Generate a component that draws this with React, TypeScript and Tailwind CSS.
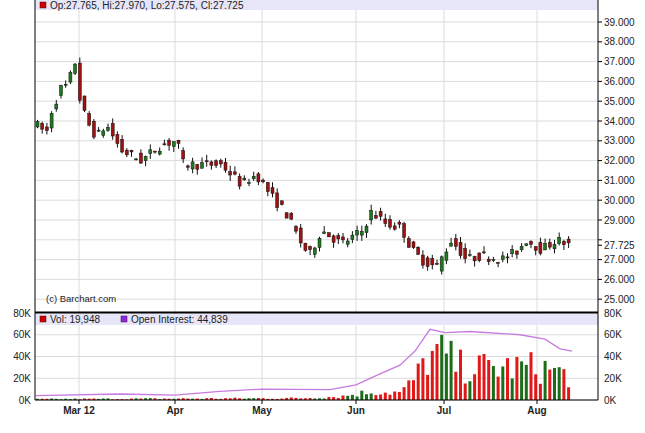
import React from 'react';

const PX0 = 35;
const PX1 = 598;
const priceY = (p: number) => 22 + (39 - p) * 19.8;
const volY = (v: number) => 400 - (v / 80000) * 87;

const keys: [number, number][] = [
  [35, 33.8], [45, 33.4], [50, 34.5], [60, 35.7], [67, 35.8], [73, 37.2], [78, 35.2], [85, 34.0],
  [95, 33.2], [105, 33.8], [120, 32.5], [140, 32.0], [160, 32.8], [175, 33.0], [182, 31.8],
  [200, 31.8], [220, 31.8], [240, 30.8], [255, 31.3], [270, 30.2], [285, 29.3], [300, 27.8],
  [308, 27.2], [320, 28.5], [340, 27.8], [360, 28.4], [370, 29.4], [385, 28.8], [400, 28.6],
  [410, 27.5], [420, 27.0], [435, 26.6], [450, 28.0], [465, 27.0], [480, 27.2], [500, 27.0],
  [515, 27.4], [525, 28.0], [540, 27.5], [555, 28.0], [570, 27.7],
];

const interp = (pts: [number, number][], x: number) => {
  for (let i = 1; i < pts.length; i++) {
    if (x <= pts[i][0]) {
      const [x0, y0] = pts[i - 1];
      const [x1, y1] = pts[i];
      return y0 + ((x - x0) / (x1 - x0)) * (y1 - y0);
    }
  }
  return pts[pts.length - 1][1];
};

let seed = 7;
const rnd = () => {
  seed = (seed * 16807) % 2147483647;
  return seed / 2147483647;
};

const candles: { x: number; o: number; c: number; h: number; l: number }[] = [];
for (let x = 36; x <= 571; x += 4.7) {
  const base = interp(keys, x);
  const prev = interp(keys, x - 4.7);
  const o = prev + (rnd() - 0.5) * 0.5;
  const c = base + (rnd() - 0.5) * 0.5;
  const h = Math.max(o, c) + rnd() * 0.3;
  const l = Math.min(o, c) - rnd() * 0.3;
  candles.push({ x, o, c, h, l });
}

const volKeys: [number, number][] = [
  [36, 1000], [300, 2000], [340, 4000], [370, 9000], [400, 8000], [415, 25000], [425, 45000],
  [440, 50000], [460, 35000], [500, 35000], [540, 35000], [572, 25000],
];
const oiKeys: [number, number][] = [
  [36, 4000], [120, 5500], [175, 4500], [220, 8000], [262, 10000], [330, 9500], [356, 14000],
  [380, 24000], [400, 32000], [415, 45000], [430, 65000], [445, 62000], [470, 63000], [520, 60000],
  [545, 56000], [560, 47000], [572, 45000],
];

const vols = candles.map((cd) => {
  const v = interp(volKeys, cd.x) * (0.4 + rnd() * 0.9);
  return { x: cd.x, v, up: cd.c >= cd.o };
});

const oiPath = oiKeys.map(([x, v], i) => `${i ? 'L' : 'M'}${x} ${volY(v)}`).join(' ');

const priceTicks = [39, 38, 37, 36, 35, 34, 33, 32, 31, 30, 29, 28, 27, 26, 25];
const months: [number, string][] = [[79, 'Mar 12'], [175, 'Apr'], [262, 'May'], [356, 'Jun'], [444, 'Jul'], [537, 'Aug']];
const volTicks = [80000, 60000, 40000, 20000, 0];

export default function App() {
  return (
    <div className="w-[645px] h-[433px] bg-white" style={{ fontFamily: '"Liberation Sans", Arial, sans-serif' }}>
      <svg width="645" height="433" viewBox="0 0 645 433" className="block">
        <rect x={PX0} y={0} width={PX1 - PX0} height={10} fill="#e6e6f8" />
        {priceTicks.map((p) => (
          <g key={p}>
            <line x1={PX0} x2={PX1} y1={priceY(p)} y2={priceY(p)} stroke="#dcdcdc" />
            <line x1={PX1} x2={PX1 + 4} y1={priceY(p)} y2={priceY(p)} stroke="#000" />
            {p !== 28 && (
              <text x={PX1 + 6} y={priceY(p) + 3.5} fontSize="10" fill="#222">{p.toFixed(3)}</text>
            )}
          </g>
        ))}
        {months.map(([x]) => (
          <line key={x} x1={x} x2={x} y1={10} y2={400} stroke="#dcdcdc" />
        ))}
        {volTicks.map((v) => (
          <g key={v}>
            <line x1={PX0} x2={PX1} y1={volY(v)} y2={volY(v)} stroke="#dcdcdc" />
            <text x={PX0 - 4} y={volY(v) + 3.5} fontSize="10" fill="#222" textAnchor="end">{v / 1000}K</text>
            <text x={PX1 + 6} y={volY(v) + 3.5} fontSize="10" fill="#222">{v / 1000}K</text>
          </g>
        ))}
        <rect x={PX0} y={314} width={PX1 - PX0} height={11} fill="#e6e6f8" />
        {candles.map((cd, i) => {
          const up = cd.c >= cd.o;
          const top = priceY(Math.max(cd.o, cd.c));
          const bot = priceY(Math.min(cd.o, cd.c));
          return (
            <g key={i}>
              <line x1={cd.x + 1.5} x2={cd.x + 1.5} y1={priceY(cd.h)} y2={priceY(cd.l)} stroke="#111" />
              <rect x={cd.x} y={top} width={3} height={Math.max(1, bot - top)} fill={up ? '#1e7a1e' : '#a01010'} stroke="#111" strokeWidth="0.5" />
            </g>
          );
        })}
        {vols.map((b, i) => (
          <rect key={i} x={b.x} y={volY(b.v)} width={3} height={400 - volY(b.v)} fill={b.up ? '#1a6e1a' : '#e01818'} />
        ))}
        <path d={oiPath} fill="none" stroke="#c77be0" strokeWidth="1.3" />
        <line x1={PX0} x2={PX0} y1={0} y2={400} stroke="#000" />
        <line x1={PX1} x2={PX1} y1={0} y2={400} stroke="#000" />
        <line x1={PX0} x2={PX1} y1={400} y2={400} stroke="#000" />
        <line x1={PX0} x2={PX1} y1={312.5} y2={312.5} stroke="#000" strokeWidth="2" />
        <text x={PX1 + 6} y={priceY(27.725) + 3.5} fontSize="10" fill="#222">27.725</text>
        <line x1={PX1} x2={PX1 + 4} y1={priceY(27.725)} y2={priceY(27.725)} stroke="#000" />
        {months.map(([x, label]) => (
          <g key={label}>
            <line x1={x} x2={x} y1={400} y2={404} stroke="#000" />
            <text x={x} y={414} fontSize="10" fontWeight="bold" fill="#222" textAnchor="middle">{label}</text>
          </g>
        ))}
        <rect x={40} y={2} width={6} height={6} fill="#c00" stroke="#600" strokeWidth="0.5" />
        <text x={50} y={8.5} fontSize="10" fill="#222">Op:27.765, Hi:27.970, Lo:27.575, Cl:27.725</text>
        <text x={46} y={302} fontSize="9.5" fill="#222">(c) Barchart.com</text>
        <rect x={40} y={316} width={6} height={6} fill="#c00" stroke="#600" strokeWidth="0.5" />
        <text x={50} y={323} fontSize="10" fill="#222">Vol: 19,948</text>
        <rect x={121} y={316} width={6} height={6} fill="#8a2be2" stroke="#404" strokeWidth="0.5" />
        <text x={131} y={323} fontSize="10" fill="#222">Open Interest: 44,839</text>
      </svg>
    </div>
  );
}
